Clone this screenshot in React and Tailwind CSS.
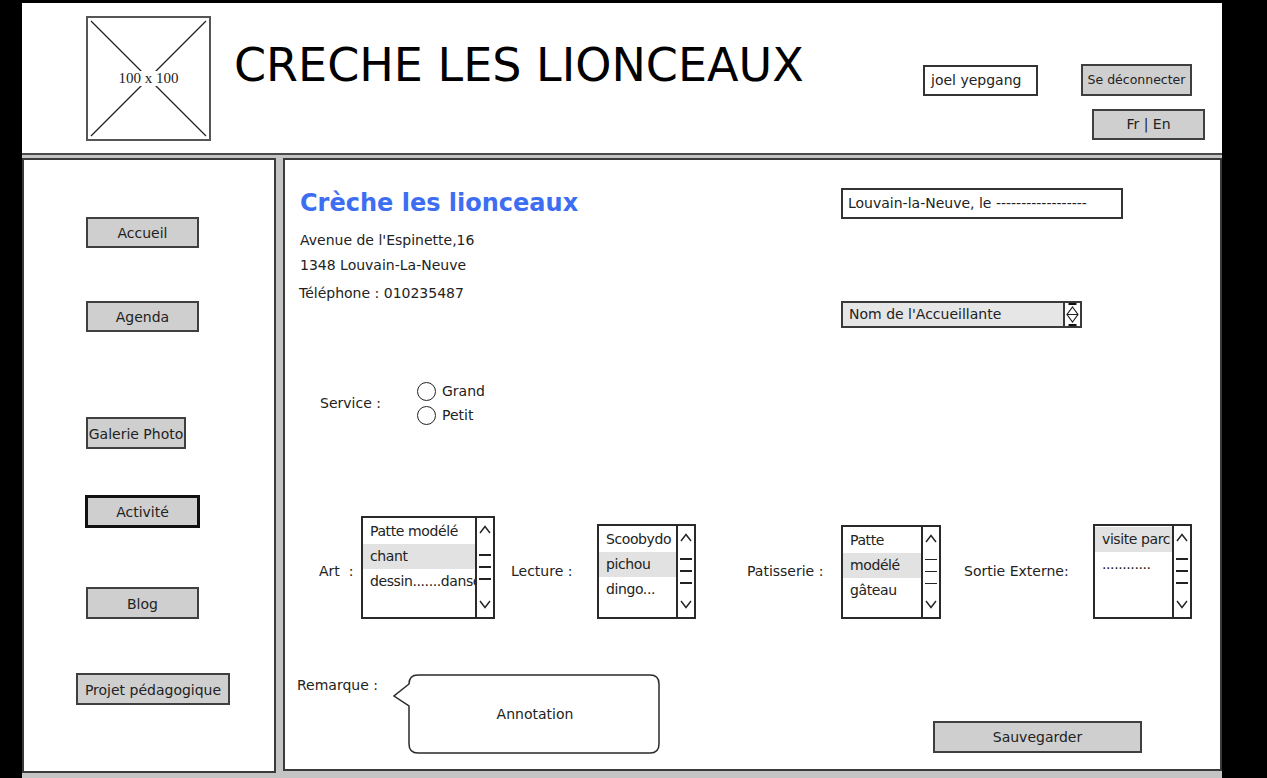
import React from "react";

const font = "font-['DejaVu_Sans',sans-serif]";

function NavButton({ label, className = "" }) {
  return (
    <div
      className={`flex items-center justify-center whitespace-nowrap bg-[#cfcfcf] border-2 border-[#3f3f3f] text-[14px] text-[#222] ${className}`}
    >
      {label}
    </div>
  );
}

function ScrollBar() {
  return (
    <div className="w-[18px] shrink-0 border-l-2 border-[#2a2a2a] flex flex-col items-center justify-between pt-[7px] pb-[8px]">
      <svg width="12" height="9" viewBox="0 0 12 9">
        <path d="M1 8 L6 1.5 L11 8" stroke="#222" strokeWidth="1.4" fill="none" />
      </svg>
      <div className="flex flex-col gap-[10.5px]">
        <div className="w-[12px] h-[1.5px] bg-[#222]" />
        <div className="w-[12px] h-[1.5px] bg-[#222]" />
        <div className="w-[12px] h-[1.5px] bg-[#222]" />
      </div>
      <svg width="12" height="9" viewBox="0 0 12 9">
        <path d="M1 1 L6 7.5 L11 1" stroke="#222" strokeWidth="1.4" fill="none" />
      </svg>
    </div>
  );
}

function ListBox({ items, selected, className = "" }) {
  return (
    <div className={`flex bg-white border-2 border-[#2a2a2a] ${className}`}>
      <div className="flex-1 min-w-0 overflow-hidden pt-[1px]">
        {items.map((item, i) => (
          <div
            key={i}
            className={`h-[25px] flex items-center pl-[7px] whitespace-nowrap text-[14px] tracking-[-0.4px] text-[#222] ${
              i === selected ? "bg-[#e2e2e2]" : ""
            }`}
          >
            {item}
          </div>
        ))}
      </div>
      <ScrollBar />
    </div>
  );
}

function Radio({ label }) {
  return (
    <div className="h-[24px] flex items-center gap-[6px]">
      <div className="w-[19px] h-[19px] rounded-full border-[1.5px] border-[#222] bg-white" />
      <span className="text-[14px] text-[#222]">{label}</span>
    </div>
  );
}

export default function App() {
  return (
    <div className={`w-[1267px] h-[778px] bg-black pl-[22px] pt-[3px] overflow-hidden ${font}`}>
      <div className="w-[1200px] h-[775px] bg-[#c4c4c4] flex flex-col">
        {/* header */}
        <header className="h-[152px] shrink-0 bg-white border-b-2 border-[#4a4a4a] flex items-start">
          <div className="ml-[64px] mt-[13px] w-[125px] h-[125px] border-2 border-[#555] relative flex items-center justify-center">
            <svg className="absolute inset-0" width="121" height="121" viewBox="0 0 121 121">
              <path d="M3 3 L118 118 M118 3 L3 118" stroke="#222" strokeWidth="1.3" />
            </svg>
            <span className="relative bg-white px-[1px] text-[15px] leading-none text-[#222] font-['Liberation_Serif',serif]">
              100 x 100
            </span>
          </div>
          <h1 className="ml-[23px] mt-[39px] text-[46px] leading-none text-black whitespace-nowrap">
            CRECHE LES LIONCEAUX
          </h1>
          <div className="ml-auto mr-[17px] mt-[61px] flex flex-col items-end">
            <div className="flex items-center gap-[43px] mr-[13px]">
              <div className="w-[115px] h-[31px] border-2 border-[#333] bg-white flex items-center pl-[6px] text-[14px] text-[#222] whitespace-nowrap">
                joel yepgang
              </div>
              <NavButton label="Se déconnecter" className="w-[111px] h-[32px] !text-[12.5px]" />
            </div>
            <NavButton label="Fr | En" className="mt-[13px] w-[113px] h-[31px]" />
          </div>
        </header>

        <div className="flex mt-[3px]">
          {/* sidebar */}
          <aside className="w-[254px] h-[615px] bg-white border-2 border-[#3a3a3a] flex flex-col items-start pl-[62px]">
            <NavButton label="Accueil" className="mt-[57px] w-[113px] h-[31px] pt-[2px]" />
            <NavButton label="Agenda" className="mt-[53px] w-[113px] h-[31px] pt-[2px]" />
            <NavButton label="Galerie Photo" className="mt-[85px] w-[100px] h-[32px] pt-[2px]" />
            <NavButton
              label="Activité"
              className="mt-[46px] -ml-[1px] w-[115px] h-[33px] border-[3px] border-[#111] pt-[2px]"
            />
            <NavButton label="Blog" className="mt-[59px] w-[113px] h-[32px] pt-[2px]" />
            <NavButton label="Projet pédagogique" className="mt-[54px] -ml-[10px] w-[154px] h-[32px] pt-[2px]" />
          </aside>

          {/* main */}
          <main className="ml-[7px] w-[939px] h-[613px] bg-white border-2 border-[#3a3a3a] flex flex-col text-[#222]">
            <div className="flex">
              <div className="w-[556px] pl-[15px] pt-[28px]">
                <h2 className="text-[24px] leading-[30px] font-bold text-[#3d6ef2] whitespace-nowrap">
                  Crèche les lionceaux
                </h2>
                <p className="mt-[10px] h-[25px] leading-[25px] text-[14px]">Avenue de l'Espinette,16</p>
                <p className="h-[25px] leading-[25px] text-[14px]">1348 Louvain-La-Neuve</p>
                <p className="mt-[3px] -ml-[1px] h-[25px] leading-[25px] text-[14px]">Téléphone : 010235487</p>
              </div>
              <div className="pt-[28px] flex flex-col items-start">
                <div className="w-[282px] h-[31px] border-2 border-[#333] flex items-center pl-[5px] text-[14px] whitespace-nowrap">
                  Louvain-la-Neuve, le ------------------
                </div>
                <div className="mt-[82px] w-[241px] h-[27px] border-2 border-[#3a3a3a] bg-[#e6e6e6] flex">
                  <div className="flex-1 flex items-center pl-[6px] text-[14px] whitespace-nowrap">
                    Nom de l'Accueillante
                  </div>
                  <div className="w-[17px] border-l-2 border-[#3a3a3a] bg-white flex items-center justify-center">
                    <svg width="13" height="23" viewBox="0 0 13 23">
                      <path d="M2.5 1 H10.5 M2.5 22 H10.5" stroke="#111" strokeWidth="2" />
                      <path
                        d="M6.5 4 L12 11.5 L6.5 19 L1 11.5 Z M1 11.5 H12"
                        stroke="#222"
                        strokeWidth="1.2"
                        fill="none"
                      />
                    </svg>
                  </div>
                </div>
              </div>
            </div>

            {/* service */}
            <div className="mt-[51px] ml-[35px] flex items-center">
              <span className="w-[97px] text-[14px]">Service :</span>
              <div className="flex flex-col">
                <Radio label="Grand" />
                <Radio label="Petit" />
              </div>
            </div>

            {/* lists */}
            <div className="mt-[89px] flex items-end text-[14px]">
              <span className="ml-[34px] w-[42px] mb-[37px] whitespace-nowrap">Art&nbsp; :</span>
              <ListBox
                className="w-[134px] h-[103px]"
                items={["Patte modélé", "chant", "dessin.......danse"]}
                selected={1}
              />
              <span className="ml-[16px] w-[86px] mb-[37px]">Lecture :</span>
              <ListBox
                className="w-[99px] h-[95px]"
                items={["Scoobydo", "pichou", "dingo..."]}
                selected={1}
              />
              <span className="ml-[51px] w-[94px] mb-[37px]">Patisserie :</span>
              <ListBox
                className="w-[100px] h-[94px]"
                items={["Patte", "modélé", "gâteau"]}
                selected={1}
              />
              <span className="ml-[23px] w-[129px] mb-[37px] whitespace-nowrap">Sortie Externe:</span>
              <ListBox
                className="w-[99px] h-[95px]"
                items={["visite parc", "............"]}
                selected={0}
              />
            </div>

            {/* remarque */}
            <div className="mt-[55px] flex items-start">
              <span className="ml-[12px] mt-[1px] w-[96px] text-[14px]">Remarque :</span>
              <div className="relative w-[268px] h-[80px] flex items-center justify-center pl-[16px]">
                <svg className="absolute inset-0" width="268" height="80" viewBox="0 0 268 80">
                  <path
                    d="M25 1 H257 Q266 1 266 10 V70 Q266 79 257 79 H25 Q16 79 16 70 V32 L1 22 L16 10 V10 Q16 1 25 1 Z"
                    stroke="#2a2a2a"
                    strokeWidth="1.5"
                    fill="white"
                  />
                </svg>
                <span className="relative text-[14px]">Annotation</span>
              </div>
              <NavButton label="Sauvegarder" className="ml-[272px] mt-[47px] w-[209px] h-[32px]" />
            </div>
          </main>
        </div>
      </div>
    </div>
  );
}
